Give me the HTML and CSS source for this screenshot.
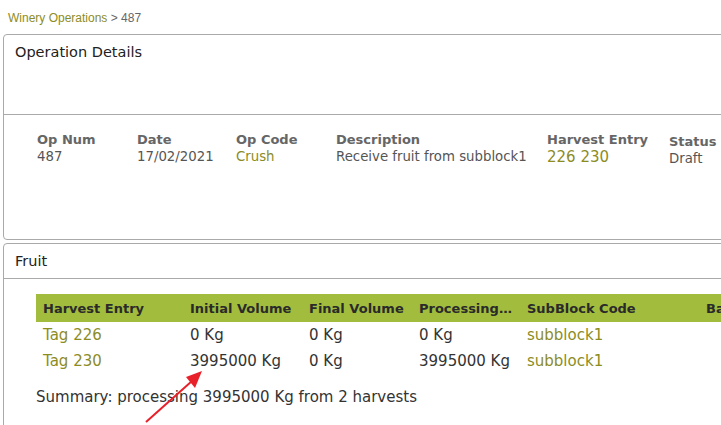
FILE: index.html
```html
<!DOCTYPE html>
<html lang="en">
<head>
    <meta charset="UTF-8">
    <meta name="viewport" content="width=device-width, initial-scale=1.0">
    <title>Winery Operations - 487</title>
    <link rel="stylesheet" href="styles.css">
</head>
<body>
    <div class="breadcrumb">
        <a href="#">Winery Operations</a> &gt; 487
    </div>

    <div class="panel details-panel">
        <div class="panel-header">Operation Details</div>
        <div class="panel-body">
            <div class="op-grid">
                <div class="op-field">
                    <div class="op-label">Op Num</div>
                    <div class="op-value">487</div>
                </div>
                <div class="op-field">
                    <div class="op-label">Date</div>
                    <div class="op-value">17/02/2021</div>
                </div>
                <div class="op-field">
                    <div class="op-label">Op Code</div>
                    <div class="op-value"><a href="#">Crush</a></div>
                </div>
                <div class="op-field">
                    <div class="op-label">Description</div>
                    <div class="op-value">Receive fruit from subblock1</div>
                </div>
                <div class="op-field">
                    <div class="op-label">Harvest Entry</div>
                    <div class="op-value big"><a href="#">226</a> <a href="#">230</a></div>
                </div>
                <div class="op-field status">
                    <div class="op-label">Status</div>
                    <div class="op-value">Draft</div>
                </div>
            </div>
        </div>
    </div>

    <div class="panel fruit-panel">
        <div class="panel-header">Fruit</div>
        <div class="panel-body">
            <table class="fruit-table">
                <thead>
                    <tr>
                        <th class="col-entry">Harvest Entry</th>
                        <th class="col-initial">Initial Volume</th>
                        <th class="col-final">Final Volume</th>
                        <th class="col-proc"><span class="clip">Processing Volume</span></th>
                        <th class="col-sub">SubBlock Code</th>
                        <th>Batch</th>
                    </tr>
                </thead>
                <tbody>
                    <tr>
                        <td><a href="#">Tag 226</a></td>
                        <td>0 Kg</td>
                        <td>0 Kg</td>
                        <td>0 Kg</td>
                        <td><a href="#">subblock1</a></td>
                        <td></td>
                    </tr>
                    <tr>
                        <td><a href="#">Tag 230</a></td>
                        <td>3995000 Kg</td>
                        <td>0 Kg</td>
                        <td>3995000 Kg</td>
                        <td><a href="#">subblock1</a></td>
                        <td></td>
                    </tr>
                </tbody>
            </table>
            <p class="summary">Summary: processing 3995000 Kg from 2 harvests</p>
        </div>
    </div>

    <!-- annotation arrow -->
    <svg class="arrow" width="721" height="425" viewBox="0 0 721 425">
        <line x1="146" y1="422" x2="192" y2="381" stroke="#e8202a" stroke-width="2"/>
        <polygon points="202,371 186,377 195,388" fill="#e8202a"/>
    </svg>
</body>
</html>
```

FILE: styles.css
```css
body {
    margin: 0;
    font-family: "DejaVu Sans", Verdana, sans-serif;
    color: #333;
    background-color: #fff;
    overflow: hidden;
    position: relative;
    height: 425px;
}
a {
    color: #8c8c1f;
    text-decoration: none;
}
.breadcrumb {
    font-family: "Liberation Sans", Arial, sans-serif;
    font-size: 12px;
    color: #666;
    padding: 11px 8px 9px;
    height: 14px;
}
.panel {
    margin-left: 3px;
    margin-right: -20px;
    border: 1px solid #aaa;
    border-radius: 4px;
}
.panel + .panel {
    margin-top: 3px;
}
.panel-header {
    font-size: 14.5px;
    color: #222;
    padding: 9px 11px;
    border-bottom: 1px solid #aaa;
}
.details-panel .panel-header {
    height: 61px;
}
.details-panel .panel-body {
    height: 124px;
    padding: 0 33px;
}
.op-grid {
    display: grid;
    grid-template-columns: 100px 99px 100px 211px 122px auto;
    padding-top: 17px;
}
.op-label {
    font-size: 13px;
    font-weight: bold;
    color: #666;
}
.op-value {
    font-size: 13.3px;
    color: #555;
    margin-top: 2px;
}
.op-value.big {
    font-size: 15px;
    margin-top: 1px;
}
.status {
    padding-top: 2px;
}
.fruit-panel .panel-body {
    padding: 15px 0 0 32px;
    height: 160px;
}
.fruit-table {
    border-collapse: collapse;
    width: 760px;
}
.fruit-table th {
    background-color: #a2bd3e;
    color: #2a2a2a;
    font-size: 13px;
    text-align: left;
    height: 28px;
    padding: 0 7px;
    white-space: nowrap;
}
.fruit-table td {
    font-size: 15px;
    color: #333;
    height: 26px;
    padding: 0 7px;
    white-space: nowrap;
}
.col-entry { width: 133px; }
.col-initial { width: 105px; }
.col-final { width: 96px; }
.col-proc { width: 94px; }
.col-sub { width: 165px; }
.clip {
    display: block;
    width: 94px;
    overflow: hidden;
    text-overflow: ellipsis;
}
.summary {
    font-size: 15px;
    margin: 14px 0 0;
    color: #333;
}
.arrow {
    position: absolute;
    left: 0;
    top: 0;
    pointer-events: none;
}
```
